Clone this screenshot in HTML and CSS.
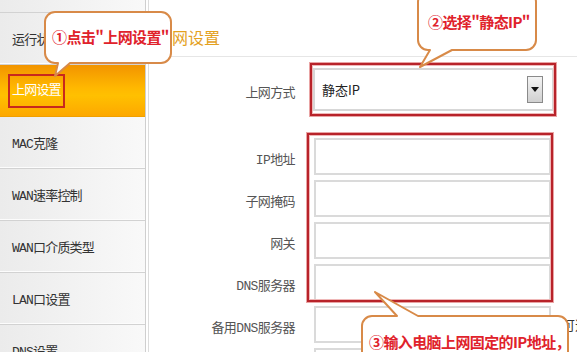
FILE: index.html
```html
<!DOCTYPE html>
<html lang="zh-CN">
<head>
<meta charset="utf-8">
<title>上网设置</title>
<link rel="stylesheet" href="styles.css">
</head>
<body>
<div class="page">
  <aside class="sidebar">
    <ul class="nav">
      <li class="nav-item">运行状态</li>
      <li class="nav-item active"><span class="mark">上网设置</span></li>
      <li class="nav-item">MAC克隆</li>
      <li class="nav-item">WAN速率控制</li>
      <li class="nav-item">WAN口介质类型</li>
      <li class="nav-item">LAN口设置</li>
      <li class="nav-item">DNS设置</li>
    </ul>
  </aside>
  <main class="main">
    <h1 class="title">上网设置</h1>
    <div class="form">
      <div class="row row-select">
        <span class="label">上网方式</span>
        <div class="select"><span class="select-text">静态IP</span><span class="select-btn"><span class="tri"></span></span></div>
      </div>
      <div class="rows">
        <div class="row"><span class="label">IP地址</span><div class="input"></div></div>
        <div class="row"><span class="label">子网掩码</span><div class="input"></div></div>
        <div class="row"><span class="label">网关</span><div class="input"></div></div>
        <div class="row"><span class="label">DNS服务器</span><div class="input"></div></div>
        <div class="row"><span class="label">备用DNS服务器</span><div class="input"></div><span class="note">可选</span></div>
        <div class="row"><span class="label"></span><div class="input"></div></div>
      </div>
    </div>
  </main>

  <div class="redbox redbox-1"></div>
  <div class="redbox redbox-2"></div>

  <div class="callout callout-1">
    <svg class="bubble" width="128" height="66" viewBox="0 0 128 66">
      <path d="M11 1H117A10 10 0 0 1 127 11V42A10 10 0 0 1 117 52H26L11 65L14 52H11A10 10 0 0 1 1 42V11A10 10 0 0 1 11 1Z"/>
    </svg>
    <span class="callout-text">①点击"上网设置"</span>
  </div>
  <div class="callout callout-2">
    <svg class="bubble" width="120" height="78" viewBox="0 0 120 78">
      <path d="M11 1H109A10 10 0 0 1 119 11V49A10 10 0 0 1 109 59H35L3 76L13 59H11A10 10 0 0 1 1 49V11A10 10 0 0 1 11 1Z"/>
    </svg>
    <span class="callout-text">②选择"静态IP"</span>
  </div>
  <div class="callout callout-3">
    <svg class="bubble" width="209" height="80" viewBox="0 0 209 80">
      <path d="M11 25H36L14 1L57 25H197A10 10 0 0 1 207 35V100H1V35A10 10 0 0 1 11 25Z"/>
    </svg>
    <span class="callout-text">③输入电脑上网固定的IP地址，</span>
  </div>
</div>
</body>
</html>
```
FILE: styles.css
```css
* { box-sizing: border-box; }
html, body { margin: 0; padding: 0; background: #fff; }
body { width: 577px; height: 352px; overflow: hidden; }

.page {
  position: relative;
  display: flex;
  width: 577px;
  height: 352px;
  overflow: hidden;
  font-family: "Liberation Mono", "Noto Sans CJK SC", monospace;
  font-size: 13px;
  color: #333;
}

.sidebar {
  flex: 0 0 146px;
  padding-top: 12px;
  background: linear-gradient(to right, #ebebeb, #f9f9f9);
  border-right: 1px solid #cfcfcf;
}
.nav { list-style: none; margin: 0; padding: 0; border-top: 1px solid #d2d2d2; }
.nav-item {
  height: 52px;
  display: flex;
  align-items: center;
  padding-left: 12px;
  border-bottom: 1px solid #d2d2d2;
  box-shadow: inset 0 -1px 0 #fcfcfc;
  letter-spacing: -0.8px;
  white-space: nowrap;
}
.nav-item.active {
  padding-left: 8px;
  background: linear-gradient(#f29400, #ffb800 45%, #ffc000 60%, #fda800);
  color: #fff;
  border-bottom-color: #f0a000;
  box-shadow: none;
}
.mark {
  border: 2px solid #c8281e;
  padding: 5px 2px 5px 2px;
  line-height: 20px;
}

.main {
  flex: 1;
  margin-left: 2px;
  border-left: 1px solid #dcdcdc;
  background: #fff;
}
.title {
  margin: 0;
  height: 57px;
  padding: 27px 0 0 7px;
  font-family: "Noto Sans CJK SC", sans-serif;
  font-weight: 400;
  font-size: 16px;
  line-height: 20px;
  color: #e4a11e;
  border-bottom: 1px solid #e6e6e6;
}

.form { padding-top: 11px; }
.rows { display: flex; flex-direction: column; gap: 5px; margin-top: 27px; }
.row { display: flex; align-items: center; }
.label {
  flex: 0 0 146px;
  text-align: right;
  color: #555;
  letter-spacing: -0.6px;
  white-space: nowrap;
  padding-top: 3px;
}
.select {
  margin-left: 18px;
  width: 241px;
  height: 43px;
  border: 2px solid #d7d7d7;
  display: flex;
  align-items: center;
  justify-content: space-between;
  padding: 0 9px 0 7px;
  background: #fff;
}
.select-text { font-family: "Noto Sans CJK SC", sans-serif; font-size: 13px; color: #222; }
.select-btn {
  width: 16px;
  height: 27px;
  border: 1px solid #8a8a8a;
  background: linear-gradient(#f4f4f4, #d0d0d0);
  display: flex;
  align-items: center;
  justify-content: center;
}
.tri {
  width: 0; height: 0;
  border-left: 4px solid transparent;
  border-right: 4px solid transparent;
  border-top: 5px solid #111;
}
.input {
  margin-left: 19px;
  width: 237px;
  height: 37px;
  border: 2px solid #dadada;
  background: #fff;
}
.note { margin-left: 11px; color: #333; white-space: nowrap; }

.redbox {
  position: absolute;
  border: 2px solid #b8232a;
  box-shadow: 0 0 0 1px #e9a4a4, inset 0 0 0 1px #efb8b8;
}
.redbox-1 { left: 310px; top: 63px; width: 246px; height: 53px; }
.redbox-2 { left: 307px; top: 133px; width: 246px; height: 169px; }

.callout { position: absolute; }
.bubble { position: absolute; left: 0; top: 0; overflow: visible; }
.bubble path { fill: #fff; stroke: #d88a48; stroke-width: 2; stroke-linejoin: round; }
.callout-text {
  position: absolute;
  font-family: "Noto Sans CJK SC", sans-serif;
  font-weight: 700;
  font-size: 15px;
  line-height: 20px;
  color: #e0222b;
  white-space: nowrap;
  letter-spacing: -0.6px;
}
.callout-1 { left: 44px; top: 11px; width: 128px; height: 66px; }
.callout-1 .callout-text { left: 8px; top: 16px; }
.callout-2 { left: 417px; top: -9px; width: 120px; height: 78px; }
.callout-2 .callout-text { left: 11px; top: 21px; }
.callout-3 { left: 361px; top: 291px; width: 209px; height: 80px; }
.callout-3 .callout-text { left: 8px; top: 41px; }
```
